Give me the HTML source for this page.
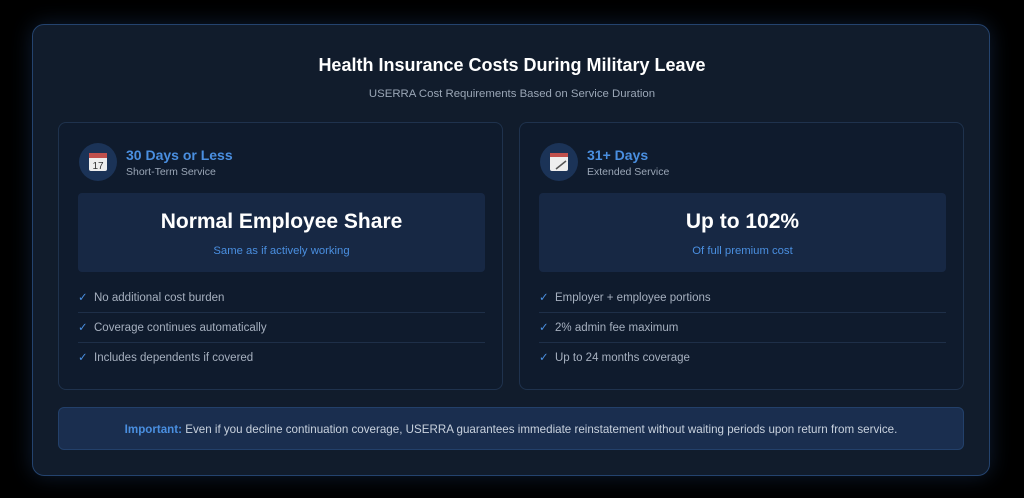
<!DOCTYPE html>
<html><head><style>
*{margin:0;padding:0;box-sizing:border-box}
body{width:1024px;height:498px;background:#000;font-family:"Liberation Sans",sans-serif;position:relative;overflow:hidden}
.outer{position:absolute;left:32px;top:24px;width:958px;height:452px;background:#111c2c;border:1px solid #24436e;border-radius:12px;box-shadow:0 0 22px rgba(40,80,140,.35)}
.t{position:absolute;left:0;width:100%;text-align:center;color:#fff}
.card{position:absolute;top:122px;width:445px;height:268px;background:#0f1b2d;border:1px solid #1f324d;border-radius:8px}
.ic{position:absolute;left:20px;top:20px;width:38px;height:38px;border-radius:50%;background:#1b3357}
.h{position:absolute;left:67px;top:24px;color:#4a8fe0;font-size:14px;font-weight:bold}
.hs{position:absolute;left:67px;top:43px;color:#9aa6b6;font-size:10.5px}
.box{position:absolute;left:19px;top:70px;width:407px;height:79px;background:#172844;border-radius:4px;text-align:center}
.big{margin-top:17px;font-size:21px;font-weight:bold;color:#fff}
.sm{margin-top:11px;font-size:11.3px;color:#4a8fe0}
.li{position:absolute;left:19px;width:407px;height:30px;font-size:11.5px;color:#a6b0bf;padding-left:16px;line-height:30px}
.li:before{content:"✓";position:absolute;left:0;color:#4a8fe0}
.sep{border-bottom:1px solid #1e2f48}
.note{position:absolute;left:58px;top:407px;width:906px;height:43px;background:#1a2e4f;border:1px solid #23406a;border-radius:6px;text-align:center;line-height:43px;font-size:11.6px;color:#c9d2de}
</style></head><body>
<div class="outer"></div>
<div class="t" style="top:55px;font-size:18px;font-weight:bold">Health Insurance Costs During Military Leave</div>
<div class="t" style="top:88px;font-size:11.4px;color:#9aa6b6">USERRA Cost Requirements Based on Service Duration</div>

<div class="card" style="left:58px">
<div class="ic"><svg width="38" height="38"><rect x="10" y="10" width="18" height="18" rx="2" fill="#eee"/><rect x="10" y="10" width="18" height="5" fill="#c0504d"/><text x="19" y="26" font-size="10" text-anchor="middle" fill="#333" font-family="Liberation Sans">17</text></svg></div>
<div class="h">30 Days or Less</div><div class="hs">Short-Term Service</div>
<div class="box"><div class="big">Normal Employee Share</div><div class="sm">Same as if actively working</div></div>
<div class="li sep" style="top:160px">No additional cost burden</div>
<div class="li sep" style="top:190px">Coverage continues automatically</div>
<div class="li" style="top:220px">Includes dependents if covered</div>
</div>

<div class="card" style="left:519px">
<div class="ic"><svg width="38" height="38"><rect x="10" y="10" width="18" height="18" rx="2" fill="#eee"/><rect x="10" y="10" width="18" height="4" fill="#c0504d"/><path d="M16 26 L26 18" stroke="#555" stroke-width="1.5"/></svg></div>
<div class="h">31+ Days</div><div class="hs">Extended Service</div>
<div class="box"><div class="big">Up to 102%</div><div class="sm">Of full premium cost</div></div>
<div class="li sep" style="top:160px">Employer + employee portions</div>
<div class="li sep" style="top:190px">2% admin fee maximum</div>
<div class="li" style="top:220px">Up to 24 months coverage</div>
</div>

<div class="note"><b style="color:#4a8fe0">Important:</b> Even if you decline continuation coverage, USERRA guarantees immediate reinstatement without waiting periods upon return from service.</div>
</body></html>
